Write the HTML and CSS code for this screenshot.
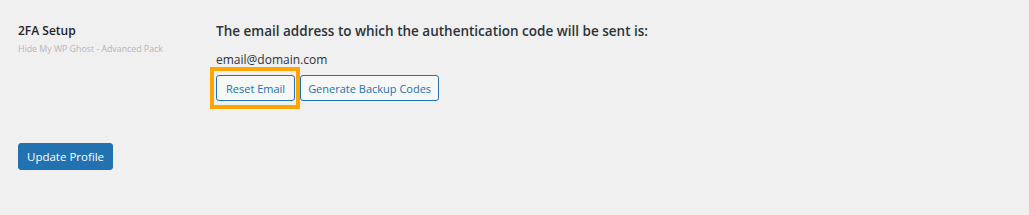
FILE: index.html
```html
<!DOCTYPE html>
<html lang="en">
<head>
  <meta charset="UTF-8">
  <title>2FA Setup</title>
  <link rel="stylesheet" href="styles.css">
</head>
<body>
  <div class="form-row">
    <div class="label-col">
      <div class="label-title">2FA Setup</div>
      <div class="label-sub">Hide My WP Ghost - Advanced Pack</div>
    </div>
    <div class="field-col">
      <h3 class="field-heading">The email address to which the authentication code will be sent is:</h3>
      <div class="field-email">email@domain.com</div>
      <div class="buttons">
        <span class="highlight"><button class="btn">Reset Email</button></span>
        <button class="btn btn-wide">Generate Backup Codes</button>
      </div>
    </div>
  </div>

  <div class="submit">
    <button class="btn-primary">Update Profile</button>
  </div>
</body>
</html>
```

FILE: styles.css
```css
body {
  margin: 0;
  padding: 22px 18px;
  background-color: #f0f0f1;
  font-family: 'Open Sans', sans-serif;
  color: #1d2327;
}
.form-row {
  display: flex;
}
.label-col {
  width: 198px;
  flex-shrink: 0;
  padding-top: 1px;
}
.label-title {
  font-size: 12px;
  font-weight: 600;
  line-height: 16px;
}
.label-sub {
  margin-top: 4px;
  font-size: 8.8px;
  color: #b4b6b8;
  line-height: 12px;
}
.field-heading {
  margin: 0;
  font-size: 13.5px;
  font-weight: 600;
  line-height: 18px;
  color: #2c3338;
}
.field-email {
  margin-top: 12px;
  font-size: 12px;
  line-height: 16px;
  color: #2c3338;
}
.buttons {
  display: flex;
  align-items: flex-start;
  margin-top: 7px;
}
.highlight {
  display: flex;
  margin: -8px 0 -8px -6px;
  padding: 4px 1px 4px 2px;
  border: 4px solid #ffa500;
}
.btn {
  height: 26px;
  padding: 0 9px;
  font-family: inherit;
  font-size: 11px;
  color: #2271b1;
  background: #f6f7f7;
  border: 1px solid #2271b1;
  border-radius: 3px;
  cursor: pointer;
}
.btn-wide {
  padding: 0 7px;
}
.submit {
  margin-top: 42px;
}
.btn-primary {
  height: 27px;
  padding: 0 8px;
  font-family: inherit;
  font-size: 11.5px;
  color: #fff;
  background: #2271b1;
  border: 1px solid #2271b1;
  border-radius: 3px;
  cursor: pointer;
}
```
